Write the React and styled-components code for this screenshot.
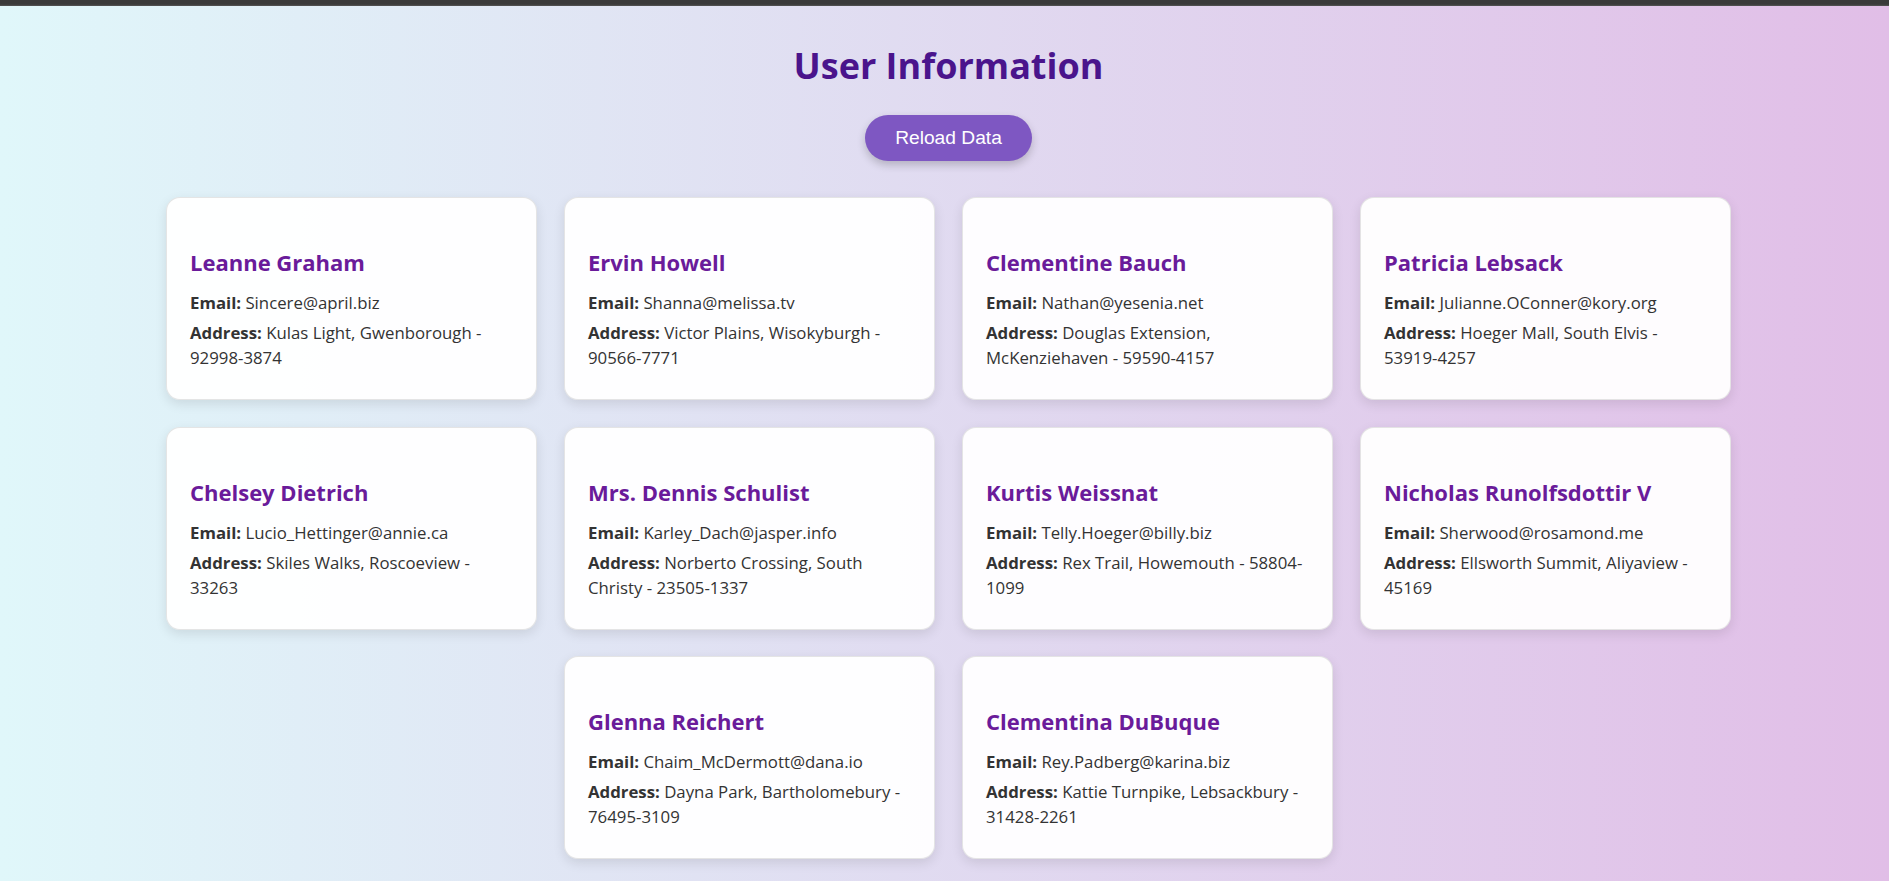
import React from "react";
import styled, { createGlobalStyle } from "styled-components";

const GlobalStyle = createGlobalStyle`
  html, body {
    margin: 0;
    padding: 0;
  }
  body {
    font-family: "Open Sans", "Noto Sans", sans-serif;
    color: #333;
    overflow: hidden;
  }
  * { box-sizing: border-box; }
`;

const TopBar = styled.div`
  height: 6px;
  background: linear-gradient(to bottom, #3a3a3a 0%, #3a3a3a 70%, #555 100%);
`;

const Page = styled.main`
  min-height: calc(100vh - 6px);
  background: linear-gradient(to right, #e0f7fa, #e1bee7);
  padding: 37px 0 20px 8px;
  display: flex;
  flex-direction: column;
  align-items: center;
`;

const Title = styled.h1`
  margin: 0;
  font-size: 36px;
  line-height: 46px;
  font-weight: 700;
  color: #4a148c;
  text-align: center;
`;

const ReloadButton = styled.button`
  margin-top: 26px;
  height: 46px;
  padding: 0 30px;
  border: none;
  border-radius: 30px;
  background: #7e57c2;
  color: #fff;
  font-family: "Liberation Sans", Arial, sans-serif;
  font-size: 19.2px;
  cursor: pointer;
  box-shadow: 0 4px 8px rgba(0, 0, 0, 0.2);
`;

const CardGrid = styled.section`
  margin-top: 36px;
  width: 1565px;
  display: flex;
  flex-wrap: wrap;
  justify-content: center;
  gap: 26.5px 27px;
`;

const Card = styled.article`
  width: 371px;
  padding: 24px 23px;
  background: rgba(255, 255, 255, 0.95);
  border: 1px solid rgba(0, 0, 0, 0.1);
  border-radius: 14px;
  box-shadow: 0 4px 12px rgba(0, 0, 0, 0.1);
`;

const Name = styled.h3`
  margin: 25px 0 13px;
  font-size: 22px;
  line-height: 30px;
  font-weight: 700;
  color: #6a1b9a;
`;

const Field = styled.p`
  margin: 5px 0;
  font-size: 16.8px;
  line-height: 25px;
  color: #333;
`;

const Label = styled.strong`
  font-weight: 700;
`;

const users = [
  { name: "Leanne Graham", email: "Sincere@april.biz", address: "Kulas Light, Gwenborough - 92998-3874" },
  { name: "Ervin Howell", email: "Shanna@melissa.tv", address: "Victor Plains, Wisokyburgh - 90566-7771" },
  { name: "Clementine Bauch", email: "Nathan@yesenia.net", address: "Douglas Extension, McKenziehaven - 59590-4157" },
  { name: "Patricia Lebsack", email: "Julianne.OConner@kory.org", address: "Hoeger Mall, South Elvis - 53919-4257" },
  { name: "Chelsey Dietrich", email: "Lucio_Hettinger@annie.ca", address: "Skiles Walks, Roscoeview - 33263" },
  { name: "Mrs. Dennis Schulist", email: "Karley_Dach@jasper.info", address: "Norberto Crossing, South Christy - 23505-1337" },
  { name: "Kurtis Weissnat", email: "Telly.Hoeger@billy.biz", address: "Rex Trail, Howemouth - 58804-1099" },
  { name: "Nicholas Runolfsdottir V", email: "Sherwood@rosamond.me", address: "Ellsworth Summit, Aliyaview - 45169" },
  { name: "Glenna Reichert", email: "Chaim_McDermott@dana.io", address: "Dayna Park, Bartholomebury - 76495-3109" },
  { name: "Clementina DuBuque", email: "Rey.Padberg@karina.biz", address: "Kattie Turnpike, Lebsackbury - 31428-2261" },
];

export default function App() {
  return (
    <>
      <GlobalStyle />
      <TopBar />
      <Page>
        <Title>User Information</Title>
        <ReloadButton>Reload Data</ReloadButton>
        <CardGrid>
          {users.map((u) => (
            <Card key={u.name}>
              <Name>{u.name}</Name>
              <Field>
                <Label>Email:</Label> {u.email}
              </Field>
              <Field>
                <Label>Address:</Label> {u.address}
              </Field>
            </Card>
          ))}
        </CardGrid>
      </Page>
    </>
  );
}
